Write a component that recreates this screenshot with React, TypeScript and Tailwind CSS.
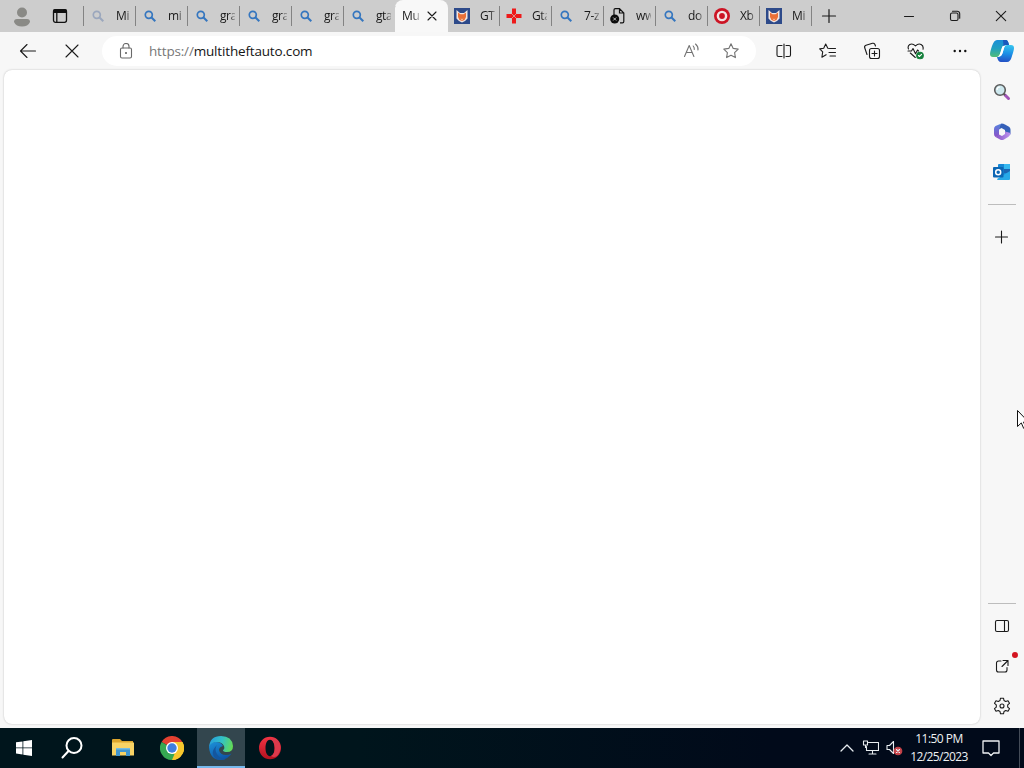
import type { ReactNode } from 'react';

type TabIcon = 'search' | 'faded' | 'fox' | 'cross' | 'file' | 'target';

const tabsBefore: { icon: TabIcon; title: string }[] = [
  { icon: 'faded', title: 'Mi' },
  { icon: 'search', title: 'mi' },
  { icon: 'search', title: 'gra' },
  { icon: 'search', title: 'gra' },
  { icon: 'search', title: 'gra' },
  { icon: 'search', title: 'gta' },
];

const tabsAfter: { icon: TabIcon; title: string }[] = [
  { icon: 'fox', title: 'GT' },
  { icon: 'cross', title: 'Gta' },
  { icon: 'search', title: '7-z' },
  { icon: 'file', title: 'ww' },
  { icon: 'search', title: 'do' },
  { icon: 'target', title: 'Xb' },
  { icon: 'fox', title: 'Mi' },
];

const Line = ({ size = 16, color = '#1b1b1b', width = 1.1, children }: {
  size?: number;
  color?: string;
  width?: number;
  children: ReactNode;
}) => (
  <svg
    width={size}
    height={size}
    viewBox={`0 0 ${size} ${size}`}
    fill="none"
    stroke={color}
    strokeWidth={width}
    strokeLinecap="round"
    strokeLinejoin="round"
    className="shrink-0"
  >
    {children}
  </svg>
);

const Favicon = ({ icon }: { icon: TabIcon }) => {
  switch (icon) {
    case 'fox':
      return (
        <svg width="16" height="16" viewBox="0 0 16 16" className="shrink-0">
          <path fill="#2d4a8a" d="M0 0h16v16H0z" />
          <path fill="#f1e6e2" d="m2.500 2 3.500 3h4l3.500-3v8.500L11 13l-3 1.500L5 13l-2.500-2.500z" />
          <path fill="#ea7038" d="m4 4.500 2.500 1.700h3L12 4.500V9l-1.500 3L8 13l-2.500-1L4 9z" />
          <path fill="#f6c9ae" d="m6.500 10.500 1.500.5 1.500-.5L8 12.500z" />
        </svg>
      );
    case 'cross':
      return (
        <svg width="16" height="16" viewBox="0 0 16 16" className="shrink-0">
          <path fill="#ee1a1a" d="M6 .5h4V6h5.500v4H10v5.500H6V10H.5V6H6z" />
          <path stroke="#d9a9a5" strokeWidth=".8" d="m5.500 5.500 5 5m0-5-5 5" />
        </svg>
      );
    case 'file':
      return (
        <svg width="16" height="16" viewBox="0 0 16 16" fill="none" className="shrink-0">
          <path stroke="#111" strokeWidth="1.200" d="M4 7V2A1.300 1.300 0 0 1 5.300.7H9.500L13.800 5v8.500a1.300 1.300 0 0 1-1.300 1.300H10M9.500.7V5h4.300" />
          <circle cx="4.700" cy="11" r="4.500" fill="#0c0c0c" />
          <path stroke="#d5d5d5" strokeWidth=".9" d="m3.200 9.500 3 3m0-3-3 3" />
        </svg>
      );
    case 'target':
      return (
        <svg width="16" height="16" viewBox="0 0 16 16" className="shrink-0">
          <circle cx="8" cy="8" r="8" fill="#cc1424" />
          <circle cx="8" cy="8" r="5.300" fill="#f3e3e3" />
          <circle cx="8" cy="8" r="2.900" fill="#cc1424" />
        </svg>
      );
    default:
      return (
        <svg
          width="16"
          height="16"
          viewBox="0 0 16 16"
          fill="none"
          stroke={icon === 'faded' ? '#9ba7bd' : '#3576bf'}
          strokeWidth="1.700"
          className="shrink-0"
        >
          <circle cx="6.800" cy="6.800" r="3.500" />
          <path strokeWidth="2" d="m9.300 9.300 4 4" />
        </svg>
      );
  }
};

const Tab = ({ icon, title }: { icon: TabIcon; title: string }) => (
  <div className="flex h-8 w-[52px] shrink-0 items-center pl-1.5">
    <Favicon icon={icon} />
    <span className="ml-2.5 w-[15px] overflow-hidden text-xs tracking-[-0.4px] whitespace-nowrap text-[#191919] [mask-image:linear-gradient(to_right,#000_60%,rgba(0,0,0,0.3))]">
      {title}
    </span>
    <span className="ml-auto h-5 w-px bg-[#838383]" />
  </div>
);

const TitleBar = () => (
  <div className="flex h-8 items-center bg-[#cdcdcd]">
    <div className="flex w-11 justify-center">
      <svg width="18" height="20" viewBox="0 0 18 20" fill="#8a8a86" className="mt-0.5">
        <circle cx="9" cy="5.500" r="5" />
        <path d="M1 15q0-3 3-3h10q3 0 3 3-2 4.500-8 4.500T1 15" />
      </svg>
    </div>
    <div className="flex w-[39px] pl-2">
      <Line width={1.300} color="#111">
        <rect x="1.500" y="1.700" width="13" height="12.600" rx="2" />
        <path fill="#111" d="M2 2h12v2.300H2z" />
        <path d="M4.800 4v10" />
      </Line>
    </div>
    <span className="h-5 w-px bg-[#838383]" />
    {tabsBefore.map((tab, i) => <Tab key={i} {...tab} />)}
    <div className="-ml-px flex h-8 w-[53px] shrink-0 items-center rounded-t-lg bg-[#f8f8f8] pl-[7px]">
      <span className="w-[17px] overflow-hidden text-xs tracking-[-0.3px] whitespace-nowrap text-[#191919] [mask-image:linear-gradient(to_right,#000_60%,rgba(0,0,0,0.3))]">
        Mu
      </span>
      <span className="ml-[5px]">
        <Line><path d="m4 4 8 8m0-8-8 8" /></Line>
      </span>
    </div>
    {tabsAfter.map((tab, i) => <Tab key={i} {...tab} />)}
    <div className="flex w-[34px] justify-center">
      <Line width={1.200}><path d="M8 1.500v13M1.500 8h13" /></Line>
    </div>
    <div className="ml-auto flex">
      <div className="flex w-[46px] justify-center">
        <Line><path d="M3.500 8.500h9" /></Line>
      </div>
      <div className="flex w-[46px] justify-center">
        <Line>
          <rect x="3.500" y="5" width="7.500" height="7.500" rx="1.500" />
          <path d="M5.500 3.200h4.700a2.500 2.500 0 0 1 2.500 2.500v4.500" />
        </Line>
      </div>
      <div className="flex w-[46px] justify-center">
        <Line><path d="m3.300 3.300 9.400 9.400m0-9.400-9.400 9.400" /></Line>
      </div>
    </div>
  </div>
);

const ToolbarItem = ({ children }: { children: ReactNode }) => (
  <div className="flex w-11 shrink-0 justify-center">{children}</div>
);

const Toolbar = () => (
  <div className="flex h-[38px] items-center bg-[#f7f7f7] pl-1.5">
    <ToolbarItem>
      <Line size={18}><path d="M16.500 9H1.500m6.500-6.500L1.500 9 8 15.500" /></Line>
    </ToolbarItem>
    <ToolbarItem>
      <Line size={18}><path d="m3 3 12 12m0-12L3 15" /></Line>
    </ToolbarItem>
    <div className="ml-2 flex h-[30px] w-[654px] shrink-0 items-center rounded-full bg-white pl-4">
      <Line color="#696969">
        <rect x="2.500" y="5" width="11" height="10" rx="1.500" />
        <path d="M5 5V3.500a3 3 0 0 1 6 0V5" />
        <circle cx="8" cy="10" r=".5" fill="#696969" />
      </Line>
      <span className="ml-[15px] text-[13.5px] tracking-[-0.17px] whitespace-nowrap text-[#151515]">
        <span className="text-[#777]">https://</span>multitheftauto.com
      </span>
      <div className="ml-auto flex items-center pr-4">
        <Line size={18} color="#737373">
          <path d="m2.500 14.500 4.700-11 4.700 11M4.200 10.500h6M11.200 4q1.300 1.500 1.100 3.500M13.500 2q3 2.500 2.500 6" />
        </Line>
        <span className="ml-[22px]">
          <Line size={18} color="#737373">
            <path d="m9 1.800 2.200 4.600 5 .7-3.600 3.500.8 5L9 13.200l-4.400 2.400.8-5L1.800 7.100l5-.7z" />
          </Line>
        </span>
      </div>
    </div>
    <div className="ml-1.5 flex items-center">
      <ToolbarItem>
        <Line>
          <path d="M6 2.500H2.500a1.500 1.500 0 0 0-1.500 1.500v8a1.500 1.500 0 0 0 1.500 1.500H6M8 1v14M10 2.500h3A1.500 1.500 0 0 1 14.500 4v8a1.500 1.500 0 0 1-1.500 1.500h-3" />
        </Line>
      </ToolbarItem>
      <ToolbarItem>
        <Line size={18}>
          <path d="M11 6.500 8.800 6.200 6.700 2 4.700 6.200l-4 .7 3 3-.8 5.300 4.200-2.500M11 6.500h5.500M10 10.500h6.500M11 14h5.500" />
        </Line>
      </ToolbarItem>
      <ToolbarItem>
        <Line size={18}>
          <rect x="6.500" y="6.500" width="10" height="10" rx="2" />
          <path d="M11.500 9v5M9 11.500h5M4 12.500 1.700 5.800A2 2 0 0 1 3 3.300l6.500-2a2 2 0 0 1 2.300 1l.7 1.700" />
        </Line>
      </ToolbarItem>
      <ToolbarItem>
        <Line size={18}>
          <path d="M1.500 7C0 3.500 4-.3 8.500 3.800 12.500 0 17 3 16 7.300M1 9h3.500L6 6.500l2.500 5.200L10.500 8l1 1M3.300 11l5 4.500" />
          <circle cx="13" cy="13.500" r="3.300" fill="#16803c" stroke="#16803c" />
          <path stroke="#fff" d="m11.500 13.500 1 1 2-2.200" />
        </Line>
      </ToolbarItem>
      <ToolbarItem>
        <svg width="16" height="16" viewBox="0 0 16 16" fill="#111">
          <circle cx="2.700" cy="8" r="1.200" />
          <circle cx="8" cy="8" r="1.200" />
          <circle cx="13.300" cy="8" r="1.200" />
        </svg>
      </ToolbarItem>
    </div>
    <div className="ml-auto pr-2.5">
      <CopilotLogo />
    </div>
  </div>
);

const CopilotLogo = () => (
  <svg width="24" height="24" viewBox="0 0 24 24">
    <defs>
      <linearGradient id="copilotA" x1=".3" y1="0" x2=".3" y2="1">
        <stop stopColor="#1b8ed8" />
        <stop offset=".5" stopColor="#21a0c0" />
        <stop offset="1" stopColor="#50bd78" />
      </linearGradient>
      <linearGradient id="copilotB" x1=".5" y1="0" x2=".4" y2="1">
        <stop stopColor="#37c3ee" />
        <stop offset=".5" stopColor="#1b8fe6" />
        <stop offset="1" stopColor="#2450c4" />
      </linearGradient>
    </defs>
    <path fill="url(#copilotB)" d="M17 6h4q3 0 3 3 0 2-2 8-1.500 6-5 6h-6q-3 0-4-5h2q2 0 3-3l2-6q1-3 3-3" />
    <path fill="url(#copilotA)" d="M7 1h9q2 0 3 5h-3q-3 0-4 3l-2 6q-1 3-3 3H3q-3 0-3-3 0-2 2-8Q4 1 7 1" />
    <path fill="#1b59bd" d="M13 1h3q2 0 3 5h-2.500q-2 0-3 1z" />
    <path fill="#fff" d="M12.800 7H15q-1 1-1.500 4l-1 3.500q-.8 2.500-2.800 2.500H8.500q1.500-1 2-3.500l1-3.500Q12 7.800 12.800 7" />
  </svg>
);

const Sidebar = () => (
  <aside className="flex w-11 shrink-0 flex-col items-center pt-0.5">
    <div className="flex h-10 items-center">
      <svg width="18" height="18" viewBox="0 0 18 18" className="-mt-px -ml-px">
        <path stroke="#a055b8" strokeWidth="3" strokeLinecap="round" d="m12 12 3.500 3.500" />
        <path stroke="#555" strokeWidth="2" d="m10 10 2 2" />
        <circle cx="7" cy="7" r="5.300" fill="#cde8ee" stroke="#5c5c5c" strokeWidth="1.600" />
        <path stroke="#fff" strokeWidth="1.200" fill="none" d="M4 7q0-3 3-3" />
      </svg>
    </div>
    <div className="flex h-10 items-center">
      <svg width="18" height="18" viewBox="0 0 18 18">
        <defs>
          <linearGradient id="officeA" x1="0" y1="0" x2="0" y2="1">
            <stop stopColor="#5484df" />
            <stop offset="1" stopColor="#8c52c8" />
          </linearGradient>
          <linearGradient id="officeC" x1="0" y1="0" x2="1" y2="0">
            <stop stopColor="#8753c6" />
            <stop offset="1" stopColor="#bd93ee" />
          </linearGradient>
        </defs>
        <path fill="url(#officeA)" d="M8.500.5Q6 3 6 7v5.500L2.500 14Q1 13 1 11V6q0-2 1.500-3z" />
        <path fill="#3560b8" d="M8.500.5q2 0 3.500 1l4 2.200q1.500 1 1.500 2.800v5L12 8.500V7L8.500 5 6 6.500Q6 2.500 8.500.5" />
        <path fill="url(#officeC)" d="M17.500 10q0 2.500-2 3.700l-4.500 2.800q-2 1-4 0L2.500 14 6 11.500l3 1.500 3-2V8.500z" />
      </svg>
    </div>
    <div className="flex h-10 items-center">
      <svg width="18" height="18" viewBox="0 0 18 18">
        <rect x="5" y="1" width="12" height="12" rx="1" fill="#1687d5" />
        <path fill="#36b8ef" d="M11 1h6v5h-6z" />
        <path fill="#1b65b3" d="M11 6h6v4h-6z" />
        <path fill="#27a9e8" d="m4 16 13-8v8q0 1-1 1H5q-1 0-1-1" />
        <rect x="0" y="4" width="10.500" height="10.500" rx="1" fill="#0c66b4" />
        <circle cx="5.200" cy="9.200" r="2.500" fill="none" stroke="#fff" strokeWidth="1.500" />
      </svg>
    </div>
    <div className="mt-3 h-px w-7 bg-[#bdbdbd]" />
    <div className="mt-6">
      <Line><path d="M7.500 2v12M1.500 8h12" /></Line>
    </div>
    <div className="mt-auto h-px w-7 bg-[#bdbdbd]" />
    <div className="mt-0.5 flex h-10 items-center">
      <Line>
        <rect x="1.500" y="2.500" width="13" height="11" rx="1.500" />
        <path d="M10.500 2.500v11" />
      </Line>
    </div>
    <div className="relative flex h-10 items-center">
      <Line>
        <path d="M7 3H4.500a2 2 0 0 0-2 2v7a2 2 0 0 0 2 2h6.500a2 2 0 0 0 2-2V9.500M9 2.500h5v5M14 2.500l-6 6" />
      </Line>
      <span className="absolute top-1.5 -right-[8px] size-1.5 rounded-full bg-[#d31420]" />
    </div>
    <div className="mb-0.5 flex h-10 items-center">
      <Line size={18}>
        <path d="M7.500 1.200h3l.5 2.300 1.700 1 2.300-.8 1.500 2.600-1.800 1.600v2.200l1.800 1.600-1.500 2.600-2.300-.8-1.700 1-.5 2.300h-3L7 14.500l-1.700-1-2.300.8-1.500-2.600 1.800-1.600V7.900L1.500 6.300 3 3.700l2.300.8 1.700-1z" />
        <circle cx="9" cy="9" r="2" />
      </Line>
    </div>
  </aside>
);

const Taskbar = () => (
  <div className="flex h-10 items-center bg-linear-to-r from-[#00151c] from-35% to-[#010a1a] to-75%">
    <div className="flex w-12 justify-center">
      <svg width="16" height="16" viewBox="0 0 16 16" fill="#fff">
        <path d="m0 2.300 6.500-.9v6.100H0zM7.300 1.300 16 0v7.500H7.300zM0 8.300h6.500v6.200L0 13.600zM7.300 8.300H16V16l-8.700-1.300z" />
      </svg>
    </div>
    <div className="flex w-12 justify-center">
      <Line size={24} color="#fff" width={2}>
        <circle cx="14" cy="9.500" r="7.500" />
        <path d="m8.500 15-6 6.500" />
      </Line>
    </div>
    <div className="flex w-[53px] justify-center">
      <svg width="22" height="20" viewBox="0 0 22 20">
        <path fill="#dca52d" d="M0 2q0-1 1-1h7l2 2h11v6H0z" />
        <path fill="#f8d365" d="M0 4.500h22v13H0z" />
        <path fill="#4196cf" d="M4 10h14v8h-4v-4H8v4H4z" />
        <path fill="#75bce1" d="M4 10h14v1.500H4z" />
      </svg>
    </div>
    <div className="flex w-12 justify-center pr-1">
      <svg width="24" height="24" viewBox="0 0 24 24" className="ml-0.5">
        <path fill="#e34131" d="M12 12 1.600 6a12 12 0 0 1 20.800 0z" />
        <path fill="#f7c72d" d="M12 12V6h10.400A12 12 0 0 1 12 24z" />
        <path fill="#36a852" d="M12 12 12 24A12 12 0 0 1 1.600 6z" />
        <path fill="#f7c72d" d="m17.200 15-5.200 9a12 12 0 0 0 10.400-18H12z" />
        <path fill="#36a852" d="m6.800 15 5.200 3h2.500L12 24 4 21z" />
        <circle cx="12" cy="12" r="6" fill="#fff" />
        <circle cx="12" cy="12" r="4.700" fill="#3f7fe0" />
      </svg>
    </div>
    <div className="flex h-10 w-12 items-center justify-center border-b-2 border-[#76b9ed] bg-[#33464e]">
      <svg width="24" height="24" viewBox="0 0 24 24" className="mt-0.5">
        <defs>
          <linearGradient id="edgeTop" x1="0" y1=".4" x2="1" y2=".6">
            <stop stopColor="#269fdd" />
            <stop offset=".5" stopColor="#33c1c6" />
            <stop offset="1" stopColor="#65dc52" />
          </linearGradient>
          <linearGradient id="edgeLow" x1="0" y1="0" x2=".5" y2="1">
            <stop stopColor="#1c91d8" />
            <stop offset="1" stopColor="#0d55a8" />
          </linearGradient>
        </defs>
        <path fill="url(#edgeLow)" d="M0 11Q1 6 7 6q5 0 7 4-4 1-4 4 1 5 7 5 3 0 5.500-1.500Q18 24 12 24 1 24 0 11" />
        <path fill="#14569e" d="M8 9q-3 4 0 9 3 5 9 5-5 2-10 0Q0 17 8 9" />
        <path fill="url(#edgeTop)" d="M0 11Q1 0 12 0q11 0 12 10 0 6-6 6-4 0-4-2 2-1 1-4-2-4-7-4-6 0-8 5" />
      </svg>
    </div>
    <div className="flex w-[50px] justify-center">
      <svg width="22" height="24" viewBox="0 0 22 24">
        <defs>
          <linearGradient id="opera" x1="0" y1="0" x2="0" y2="1">
            <stop stopColor="#f23444" />
            <stop offset="1" stopColor="#b5121f" />
          </linearGradient>
        </defs>
        <path fill="url(#opera)" fillRule="evenodd" d="M11 .8a11 11.200 0 1 0 0 22.400 11 11.200 0 1 0 0-22.400m0 3c2.800 0 4.500 3.500 4.500 8.200s-1.700 8.200-4.500 8.200S6.500 16.700 6.500 12 8.200 3.800 11 3.800" />
        <path fill="#dc3a4c" d="M12 3.500q4-2.500 7 1 5 7 0 14.500-3 3.500-7 1 3.800-2 3.800-8T12 3.500" />
      </svg>
    </div>
    <div className="ml-auto flex h-10 items-center">
      <div className="flex w-6 justify-center">
        <Line color="#e8edf0" width={1.300}><path d="m3 11 6-6 6 6" /></Line>
      </div>
      <div className="flex w-6 justify-center">
        <Line size={18} color="#e8edf0">
          <path d="M7.500 3.500h10v8h-12v-4M11.500 11.500v3.500M8 15h7M2.500 2h4v4h-4zM4.500 6v2.500H5.500" />
        </Line>
      </div>
      <div className="flex w-6 justify-center">
        <Line size={18} color="#e8edf0">
          <path d="M2 6.500h2.500l4-4v12l-4-4H2z" />
          <circle cx="13" cy="12" r="3.800" fill="#c8444a" stroke="#c8444a" />
          <path d="m11.500 10.500 3 3m0-3-3 3" />
        </Line>
      </div>
      <div className="w-[66px] pt-0.5 text-center text-xs leading-[18px] whitespace-nowrap text-[#eef1f3]">
        <div className="-mt-0.5 tracking-[-0.54px]">11:50 PM</div>
        <div className="tracking-[-0.6px]">12/25/2023</div>
      </div>
      <div className="flex w-[38px] justify-center">
        <Line size={18} color="#eef1f3" width={1.300}>
          <path d="M1 2h16v12h-5.500L9 16.500 6.500 14H1z" />
        </Line>
      </div>
      <div className="ml-[9px] h-10 w-px bg-[#444c58]" />
      <div className="w-1" />
    </div>
  </div>
);

const App = () => (
  <div className="relative flex h-screen w-screen flex-col overflow-hidden bg-[#f7f7f7] font-['Open_Sans',sans-serif]">
    <TitleBar />
    <Toolbar />
    <div className="flex min-h-0 flex-1">
      <main className="mb-1 ml-1 w-[976px] shrink-0 rounded-lg bg-white shadow-[0_0_2px_rgba(0,0,0,0.25)]" />
      <Sidebar />
    </div>
    <Taskbar />
    <svg width="12" height="19" viewBox="0 0 12 19" className="absolute top-[410px] left-[1017px]">
      <path fill="#fff" stroke="#111" d="M.5.500v16l3.800-3.600 2.400 5.500 2.200-1-2.400-5.400h5z" />
    </svg>
  </div>
);

export default App;
